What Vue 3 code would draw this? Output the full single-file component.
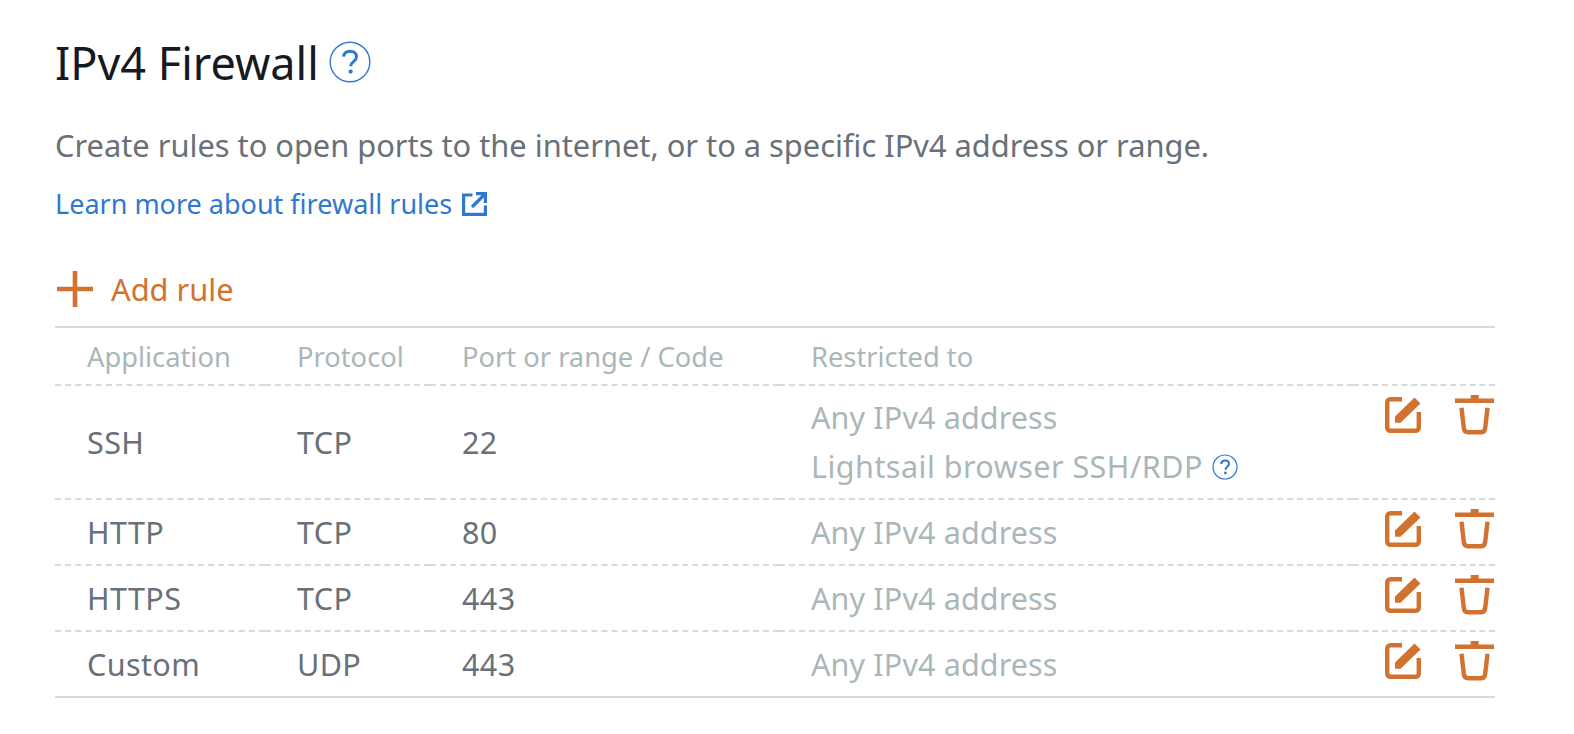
<script setup>
const rules = [
  { app: 'SSH', protocol: 'TCP', port: '22', browser: true },
  { app: 'HTTP', protocol: 'TCP', port: '80' },
  { app: 'HTTPS', protocol: 'TCP', port: '443' },
  { app: 'Custom', protocol: 'UDP', port: '443' }
]
</script>

<template>
  <div class="firewall">
    <h1 class="title">
      IPv4 Firewall
      <svg class="help-big" width="42" height="42" viewBox="0 0 42 42" fill="none">
        <circle cx="21" cy="21" r="19.8" stroke="#2f78d0" stroke-width="1.4" />
        <path d="M14.6 15.6c.4-3.4 3-5.4 6.5-5.4 3.7 0 6.4 2.2 6.4 5.5 0 4.9-5.9 4.9-5.9 9.6" stroke="#2f78d0" stroke-width="3" />
        <circle cx="21.6" cy="30.6" r="2.1" fill="#2f78d0" />
      </svg>
    </h1>
    <p class="intro">Create rules to open ports to the internet, or to a specific IPv4 address or range.</p>
    <a class="learn" href="#">
      Learn more about firewall rules
      <svg width="25" height="24" viewBox="0 0 25 24" fill="none" stroke="#2f78d0" stroke-width="3.2">
        <path d="M10.500 3H1.600V22.400H23.400V13.500" />
        <path d="M10 15L22 3" />
        <path d="M14 1.600H23.400V11" />
      </svg>
    </a>
    <div class="add-rule">
      <svg width="36" height="36" viewBox="0 0 36 36" stroke="#d27231" stroke-width="4.600">
        <path d="M0 18H36M18 0V36" />
      </svg>
      <span>Add rule</span>
    </div>
    <table class="rules">
      <thead>
        <tr>
          <th class="c-app">Application</th>
          <th class="c-proto">Protocol</th>
          <th class="c-port">Port or range / Code</th>
          <th>Restricted to</th>
          <th class="c-actions"></th>
        </tr>
      </thead>
      <tbody>
        <tr v-for="rule in rules" :key="rule.app">
          <td>{{ rule.app }}</td>
          <td>{{ rule.protocol }}</td>
          <td>{{ rule.port }}</td>
          <td class="restricted">
            <div>Any IPv4 address</div>
            <div v-if="rule.browser" class="browser">
              Lightsail browser SSH/RDP
              <svg width="26" height="26" viewBox="0 0 26 26" fill="none">
                <circle cx="13" cy="13" r="12" stroke="#2f78d0" stroke-width="1.2" />
                <path d="M9.200 10c.2-2.200 1.800-3.500 3.900-3.500 2.300 0 3.900 1.300 3.900 3.300 0 3-3.500 3-3.500 6" stroke="#2f78d0" stroke-width="2" />
                <circle cx="13.400" cy="19" r="1.400" fill="#2f78d0" />
              </svg>
            </div>
          </td>
          <td class="actions-cell">
            <div class="actions">
              <svg class="edit" width="36" height="36" viewBox="0 0 36 36" fill="none">
                <path d="M17 2.200H5.500A3.300 3.300 0 0 0 2.200 5.500V30.500A3.300 3.300 0 0 0 5.500 33.800H30.500A3.300 3.300 0 0 0 33.800 30.500V15" stroke="#d27231" stroke-width="4.400" />
                <path d="M10 19.500L29.500 0.500L35.500 6.500L15.500 25.700H10Z" fill="#d27231" />
              </svg>
              <svg width="39" height="40" viewBox="0 0 39 40" fill="none" stroke="#d27231">
                <path d="M0 5.700H39" stroke-width="4.600" />
                <path d="M15.700 4V0H23.700V4" fill="#d27231" stroke="none" />
                <path d="M6.500 12.700L8.800 33C9.100 36 10.800 37.300 13.300 37.300H25.700C28.200 37.300 29.900 36 30.200 33L32.500 12.700" stroke-width="4.400" />
              </svg>
            </div>
          </td>
        </tr>
      </tbody>
    </table>
  </div>
</template>

<style>
body {
  background: #fff;
}
</style>

<style scoped>
.firewall {
  box-sizing: border-box;
  width: 1574px;
  height: 734px;
  padding: 35px 79px 0 55px;
  font-family: "Noto Sans", "Open Sans", sans-serif;
  overflow: hidden;
}

.title {
  display: flex;
  align-items: center;
  gap: 10px;
  height: 54px;
  margin: 0;
  font-size: 45px;
  font-weight: 400;
  color: #16191f;
}

.intro {
  margin: 37px 0 0;
  font-size: 30.800px;
  line-height: 38px;
  color: #687078;
}

.learn {
  display: flex;
  align-items: center;
  gap: 10px;
  margin-top: 22px;
  font-size: 27px;
  line-height: 36px;
  color: #2f78d0;
  text-decoration: none;
}

.add-rule {
  display: flex;
  align-items: center;
  gap: 18px;
  margin: 49px 0 0 2px;
  height: 36px;
  font-size: 30.800px;
  color: #d27231;
}

.rules {
  width: 1440px;
  margin-top: 19px;
  border-collapse: collapse;
  table-layout: fixed;
  border-top: 2px solid #d5dbdb;
  border-bottom: 2px solid #d5dbdb;
  font-size: 30.500px;
  letter-spacing: 0.4px;
  color: #687078;
}

.rules th {
  height: 56px;
  padding: 0 0 0 32px;
  font-size: 27.300px;
  font-weight: 400;
  letter-spacing: 0;
  text-align: left;
  color: #aab7b8;
}

.rules td {
  box-sizing: border-box;
  height: 66px;
  padding: 0 0 0 32px;
  border-top: 2px dashed #d5dbdb;
}

.c-app {
  width: 178px;
}

.c-proto {
  width: 133px;
}

.c-port {
  width: 317px;
}

.c-actions {
  width: 110px;
}

.restricted {
  color: #aab7b8;
  line-height: 49px;
  letter-spacing: 0.13px;
}

.rules td.restricted {
  padding: 7px 0 7px 32px;
}

.rules td.actions-cell {
  padding: 9px 0 0;
  vertical-align: top;
}

.browser {
  display: flex;
  align-items: center;
  gap: 9px;
  letter-spacing: 0.48px;
}

.actions {
  display: flex;
  align-items: flex-start;
  gap: 34px;
  margin-left: 32px;
}

.edit {
  margin-top: 2px;
}
</style>
